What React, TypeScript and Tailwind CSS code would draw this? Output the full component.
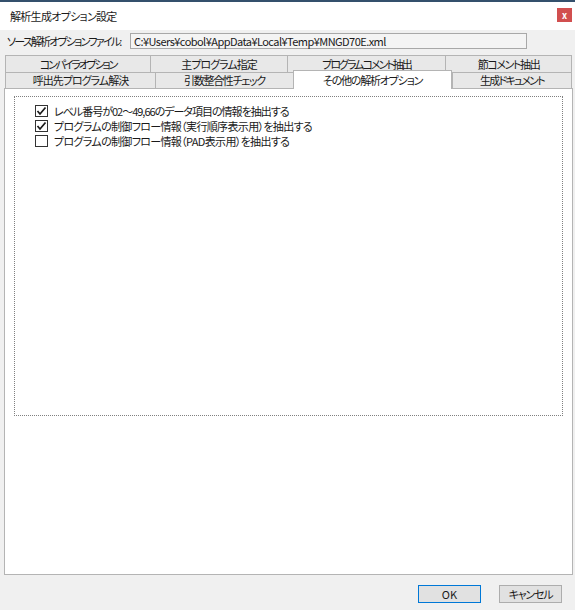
import React from 'react';

const font = { fontFamily: '"Noto Sans CJK JP", "Noto Sans", sans-serif' };

const base = 'text-[11px] leading-none text-[#1a1a1a] whitespace-nowrap [font-feature-settings:"palt"]';

const Tab: React.FC<{ label: string; w: string; tr: string; last?: boolean }> = ({ label, w, tr, last }) => (
  <div
    className={`${w} h-full flex items-center justify-center bg-[#e8e8e8] border-t border-l border-[#b4b4b4] ${last ? 'border-r' : ''} ${base} ${tr}`}
  >
    {label}
  </div>
);

const CheckRow: React.FC<{ checked?: boolean; label: string; tr: string }> = ({ checked, label, tr }) => (
  <div className="flex items-center h-[14px]">
    <div className="w-[13px] h-[12px] shrink-0 border border-[#333] bg-white flex items-center justify-center">
      {checked && (
        <svg width="11" height="10" viewBox="0 0 11 10">
          <polyline points="1.5,5 4,8 9.5,1.5" fill="none" stroke="#1a1a1a" strokeWidth="1.7" />
        </svg>
      )}
    </div>
    <span className={`ml-[6px] ${base} ${tr}`}>{label}</span>
  </div>
);

export default function App() {
  return (
    <div className="w-[575px] h-[610px] bg-[#f0f0f0] flex flex-col overflow-hidden" style={font}>
      {/* title bar */}
      <div className="h-[30px] bg-white border-t-2 border-[#34506c] flex items-center justify-between pl-[10px] pr-[3px]">
        <span className={`${base} tracking-[-0.7px]`}>解析生成オプション設定</span>
        <div className="w-[15px] h-[14px] bg-[#d14f4f] flex items-center justify-center text-white text-[9px] font-bold leading-none mt-[-2px]">
          x
        </div>
      </div>

      {/* source file row */}
      <div className="flex items-center h-[16px] mt-[3px] pl-[7px]">
        <span className={`w-[123px] shrink-0 ${base} tracking-[-1.8px]`}>ソース解析オプションファイル:</span>
        <div className={`w-[397px] h-[16px] shrink-0 border border-[#a8a8a8] bg-[#f4f4f4] flex items-center pl-[3px] ${base} tracking-[-0.55px]`}>
          C:¥Users¥cobol¥AppData¥Local¥Temp¥MNGD70E.xml
        </div>
      </div>

      {/* tabs */}
      <div className="mt-[6px] ml-[5px] flex flex-col">
        <div className="flex h-[17px]">
          <Tab label="コンパイラオプション" w="w-[145px]" tr="tracking-[-2.2px]" />
          <Tab label="主プログラム指定" w="w-[137px]" tr="tracking-[-1px]" />
          <Tab label="プログラムコメント抽出" w="w-[158px]" tr="tracking-[-2px]" />
          <Tab label="節コメント抽出" w="w-[127px]" tr="tracking-[-1.4px]" last />
        </div>
        <div className="flex h-[16px] items-end">
          <Tab label="呼出先プログラム解決" w="w-[150px]" tr="tracking-[-1px]" />
          <Tab label="引数整合性チェック" w="w-[138px]" tr="tracking-[-1.3px]" />
          <div
            className={`w-[159px] h-[19px] mt-[-2px] mb-[-1px] relative z-10 bg-white border border-b-0 border-[#b4b4b4] flex items-center justify-center ${base} tracking-[-1.2px]`}
          >
            その他の解析オプション
          </div>
          <Tab label="生成ドキュメント" w="w-[120px]" tr="tracking-[-1.8px]" last />
        </div>
      </div>

      {/* panel */}
      <div className="ml-[4px] w-[569px] h-[487px] bg-white border border-[#b4b4b4]">
        <div className="ml-[9px] mt-[7px] w-[549px] h-[320px] border border-dotted border-[#808080] pl-[20px] pt-[7px] flex flex-col gap-[1px]">
          <CheckRow checked label="レベル番号が02～49,66のデータ項目の情報を抽出する" tr="tracking-[-1px]" />
          <CheckRow checked label="プログラムの制御フロー情報（実行順序表示用）を抽出する" tr="tracking-[-0.65px]" />
          <CheckRow label="プログラムの制御フロー情報（PAD表示用）を抽出する" tr="tracking-[-0.65px]" />
        </div>
      </div>

      {/* buttons */}
      <div className="flex justify-end gap-[18px] mt-[10px] pr-[13px]">
        <button className={`w-[63px] h-[18px] bg-[#e1e1e1] border border-[#0078d7] flex items-center justify-center ${base}`}>
          OK
        </button>
        <button className={`w-[63px] h-[18px] bg-[#e1e1e1] border border-[#adadad] flex items-center justify-center ${base} tracking-[-1.2px]`}>
          キャンセル
        </button>
      </div>
    </div>
  );
}
